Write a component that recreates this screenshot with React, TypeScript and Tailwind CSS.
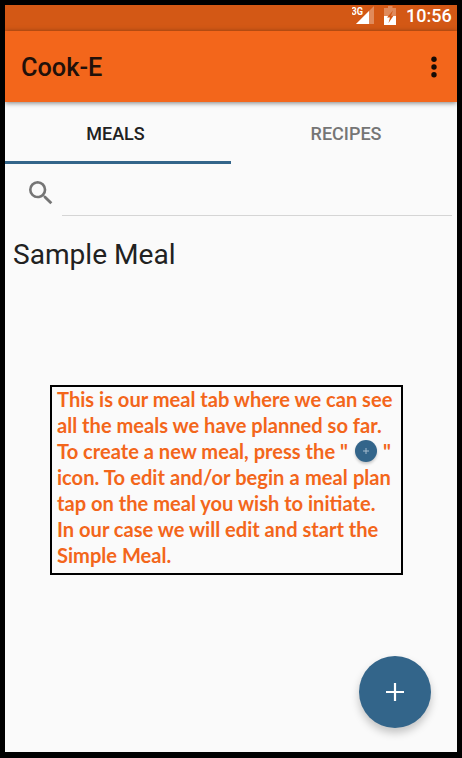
import React from "react";

function StatusBar() {
  return (
    <div className="flex h-[26px] shrink-0 items-start justify-end bg-[#d35815] pr-[5px] text-white">
      <svg width="24" height="26" viewBox="0 0 24 26" className="shrink-0">
        <path d="M22 1v18H4z" fill="#fff" fillOpacity="0.3" />
        <path d="M17 6v13H4z" fill="#fff" />
        <path d="M0 0h11.500v10H0z" fill="#d35815" />
        <text x="-0.5" y="9.500" fontSize="11" fontWeight="700" fill="#fff" fontFamily="Roboto, sans-serif" textLength="11.5" lengthAdjust="spacingAndGlyphs">3G</text>
      </svg>
      <svg width="13" height="26" viewBox="0 0 13 26" className="ml-[8px] shrink-0">
        <path d="M4 1h4.500v2H12v8H0V3h4z" fill="#fff" fillOpacity="0.3" />
        <path d="M0 11h12v9H0z" fill="#fff" />
        <path d="M9 5.500 3 12.500h3L4.500 18 9.500 10.800H7z" fill="#d35815" />
      </svg>
      <span className="ml-[9px] w-[46px] whitespace-nowrap text-[18px] leading-[22px] font-medium">10:56</span>
    </div>
  );
}

function AppBar() {
  return (
    <header className="relative flex h-[71px] shrink-0 items-center justify-between bg-[#f3661b] pr-5 pl-4 shadow-[0_1px_5px_rgba(0,0,0,0.5)]">
      <h1 className="mt-[3px] text-[25.300px] leading-8 font-medium text-[#20100a]">Cook-E</h1>
      <svg width="6" height="22" viewBox="0 0 6 22" fill="#160b05">
        <circle cx="3" cy="3.300" r="2.700" />
        <circle cx="3" cy="11" r="2.700" />
        <circle cx="3" cy="18.700" r="2.700" />
      </svg>
    </header>
  );
}

function Tabs() {
  return (
    <nav className="grid h-[62px] shrink-0 grid-cols-2 text-center text-[18px] leading-[64px] font-medium">
      <div className="h-[62px] border-b-[3px] border-[#33658a] pr-[5px] text-[#212121]">MEALS</div>
      <div className="pl-[4px] text-[#757575]">RECIPES</div>
    </nav>
  );
}

function Search() {
  return (
    <div className="flex h-[52px] shrink-0 pr-[5px] pl-[20px]">
      <svg width="32" height="32" viewBox="0 0 24 24" fill="#757575" className="mt-[13px] shrink-0">
        <path d="M15.500 14h-.79l-.28-.27A6.471 6.471 0 0 0 16 9.500 6.500 6.500 0 1 0 9.500 16c1.610 0 3.090-.59 4.230-1.570l.27.28v.79l5 4.990L20.490 19l-4.990-5zm-6 0C7.010 14 5 11.990 5 9.500S7.010 5 9.500 5 14 7.010 14 9.500 11.990 14 9.500 14z" />
      </svg>
      <div className="ml-[5px] grow border-b border-[#d5d5d5]" />
    </div>
  );
}

function Note() {
  const line = "block h-[26px] whitespace-nowrap";
  return (
    <section className="ml-[45px] h-[190px] w-[353px] shrink-0 border-2 border-black pl-[5px] font-['Lato',sans-serif] text-[20.100px] leading-[24px] font-bold text-[#f3661b]">
      <p>
        <span className={line}>This is our meal tab where we can see</span>
        <span className={line}>all the meals we have planned so far.</span>
        <span className="flex h-[26px] items-start whitespace-nowrap">
          <span className="w-[292px]">To create a new meal, press the "</span>
          <span className="mx-[6px] mt-[1px] flex size-[22px] items-center justify-center rounded-full bg-[#33658a] shadow-[0_2px_3px_rgba(0,0,0,0.2)]">
            <svg width="6" height="6" viewBox="0 0 6 6" stroke="#a5bccd">
              <path d="M3 0v6M0 3h6" />
            </svg>
          </span>
          <span>"</span>
        </span>
        <span className="block h-[26px] whitespace-nowrap [word-spacing:0.3px]">icon. To edit and/or begin a meal plan</span>
        <span className={line}>tap on the meal you wish to initiate.</span>
        <span className={line}>In our case we will edit and start the</span>
        <span className={line}>Simple Meal.</span>
      </p>
    </section>
  );
}

export default function App() {
  return (
    <div className="h-[758px] w-[462px] overflow-hidden border-x-[5px] border-t-[5px] border-b-[6px] border-black bg-[#fafafa] font-['Roboto',sans-serif]">
      <main className="flex h-full flex-col">
        <StatusBar />
        <AppBar />
        <Tabs />
        <Search />
        <h2 className="mt-[22px] mb-[113px] h-[34px] shrink-0 pl-[8px] text-[28.100px] leading-[34px] text-[#212121]">Sample Meal</h2>
        <Note />
        <button aria-label="Add meal" className="mt-auto mr-[26px] mb-[24px] flex size-[72px] shrink-0 items-center justify-center self-end rounded-full bg-[#33658a] shadow-[0_5px_9px_rgba(0,0,0,0.22)]">
          <svg width="18" height="18" viewBox="0 0 18 18" stroke="#fff" strokeWidth="2.200">
            <path d="M9 0v18M0 9h18" />
          </svg>
        </button>
      </main>
    </div>
  );
}
